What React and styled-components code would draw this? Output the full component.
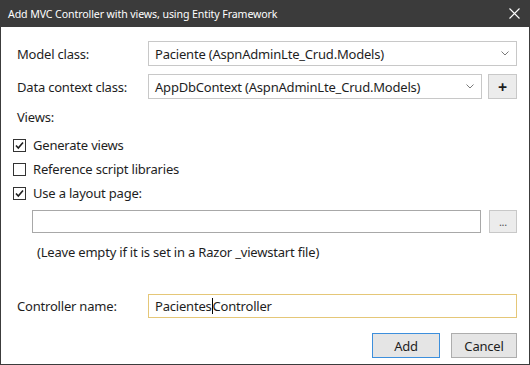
import React from 'react'
import styled, { createGlobalStyle } from 'styled-components'

const Global = createGlobalStyle`
  html, body {
    margin: 0;
    padding: 0;
    background: #ffffff;
  }
  body {
    font-family: "Noto Sans", "Open Sans", sans-serif;
    font-size: 13px;
    letter-spacing: -0.2px;
    color: #1e1e1e;
  }
`

const Chevron = () => (
  <svg width="8" height="5" viewBox="0 0 8 5">
    <path d="M0.5 0.5 L4 4 L7.5 0.5" fill="none" stroke="#7a7a7a" strokeWidth="1" />
  </svg>
)

const Check = () => (
  <svg width="11" height="11" viewBox="0 0 11 11">
    <path d="M2 5.5 L4.3 8 L9 2.5" fill="none" stroke="#1e1e1e" strokeWidth="1.6" />
  </svg>
)

const App = () => (
  <>
    <Global />
    <Window>
      <TitleBar>
        <Title>Add MVC Controller with views, using Entity Framework</Title>
        <Close>
          <svg width="11" height="11" viewBox="0 0 11 11">
            <path d="M0.5 0.5 L10.5 10.5 M10.5 0.5 L0.5 10.5" stroke="#ffffff" strokeWidth="1.1" />
          </svg>
        </Close>
      </TitleBar>
      <Body>
        <Row>
          <Label>Model class:</Label>
          <Select>
            <span>Paciente (AspnAdminLte_Crud.Models)</span>
            <Chevron />
          </Select>
        </Row>
        <Row top={8}>
          <Label>Data context class:</Label>
          <Select>
            <span>AppDbContext (AspnAdminLte_Crud.Models)</span>
            <Chevron />
          </Select>
          <PlusButton>+</PlusButton>
        </Row>
        <Section>Views:</Section>
        <Checks>
          <CheckRow>
            <Box><Check /></Box>
            <span>Generate views</span>
          </CheckRow>
          <CheckRow>
            <Box />
            <span>Reference script libraries</span>
          </CheckRow>
          <CheckRow>
            <Box><Check /></Box>
            <span>Use a layout page:</span>
          </CheckRow>
        </Checks>
        <LayoutRow>
          <TextInput />
          <SmallButton>...</SmallButton>
        </LayoutRow>
        <Hint>(Leave empty if it is set in a Razor _viewstart file)</Hint>
        <Row top={33}>
          <Label>Controller name:</Label>
          <NameInput>
            Pacientes<Caret />Controller
          </NameInput>
        </Row>
        <Actions>
          <Button primary>Add</Button>
          <Button>Cancel</Button>
        </Actions>
      </Body>
    </Window>
  </>
)

const Window = styled.div`
  width: 530px;
  height: 365px;
  box-sizing: border-box;
  border: 1px solid #3c3c3c;
  border-top: none;
  display: flex;
  flex-direction: column;
  background: #ffffff;
`

const TitleBar = styled.div`
  height: 27px;
  background: #3b3b3b;
  display: flex;
  align-items: center;
  justify-content: space-between;
  padding: 0 10px 0 8px;
  margin: 0 -1px;
`

const Title = styled.span`
  color: #ffffff;
  font-size: 10.6px;
  letter-spacing: -0.1px;
`

const Close = styled.span`
  display: flex;
  align-items: center;
`

const Body = styled.div`
  padding: 14px 12px 0 16px;
  display: flex;
  flex-direction: column;
`

const Row = styled.div`
  display: flex;
  align-items: center;
  gap: 6px;
  margin-top: ${({ top }) => (top ? `${top}px` : '0')};
`

const Label = styled.span`
  width: 125px;
  flex-shrink: 0;
`

const Select = styled.div`
  flex: 1;
  height: 25px;
  box-sizing: border-box;
  border: 1px solid #c8c8c8;
  display: flex;
  align-items: center;
  justify-content: space-between;
  padding: 0 7px 0 6px;
  background: #ffffff;
`

const PlusButton = styled.div`
  width: 29px;
  height: 25px;
  box-sizing: border-box;
  border: 1px solid #c8c8c8;
  background: #ececec;
  display: flex;
  align-items: center;
  justify-content: center;
  font-weight: bold;
  font-size: 16px;
`

const Section = styled.div`
  margin-top: 9px;
  line-height: 18px;
`

const Checks = styled.div`
  display: flex;
  flex-direction: column;
  gap: 6px;
  margin-top: 10px;
  margin-left: -4px;
`

const CheckRow = styled.div`
  display: flex;
  align-items: center;
  gap: 7px;
  line-height: 18px;
`

const Box = styled.span`
  width: 13px;
  height: 13px;
  box-sizing: border-box;
  border: 1px solid #333333;
  display: flex;
  align-items: center;
  justify-content: center;
`

const LayoutRow = styled.div`
  display: flex;
  gap: 8px;
  margin-top: 8px;
  margin-left: 15px;
`

const TextInput = styled.div`
  flex: 1;
  height: 23px;
  box-sizing: border-box;
  border: 1px solid #a8a8a8;
`

const SmallButton = styled.div`
  width: 28px;
  height: 23px;
  box-sizing: border-box;
  border: 1px solid #c8c8c8;
  background: #ececec;
  display: flex;
  align-items: center;
  justify-content: center;
  font-size: 11px;
  color: #555555;
`

const Hint = styled.div`
  margin-top: 10px;
  margin-left: 20px;
`

const NameInput = styled.div`
  flex: 1;
  height: 24px;
  box-sizing: border-box;
  border: 1px solid #e5c778;
  display: flex;
  align-items: center;
  padding-left: 6px;
`

const Caret = styled.span`
  display: inline-block;
  width: 1px;
  height: 16px;
  background: #000000;
`

const Actions = styled.div`
  display: flex;
  justify-content: flex-end;
  gap: 11px;
  margin-top: 15px;
`

const Button = styled.div`
  width: ${({ primary }) => (primary ? '68px' : '66px')};
  height: 25px;
  box-sizing: border-box;
  border: 1px solid ${({ primary }) => (primary ? '#3d8fdc' : '#adadad')};
  background: #e5e5e5;
  display: flex;
  align-items: center;
  justify-content: center;
`

export default App
